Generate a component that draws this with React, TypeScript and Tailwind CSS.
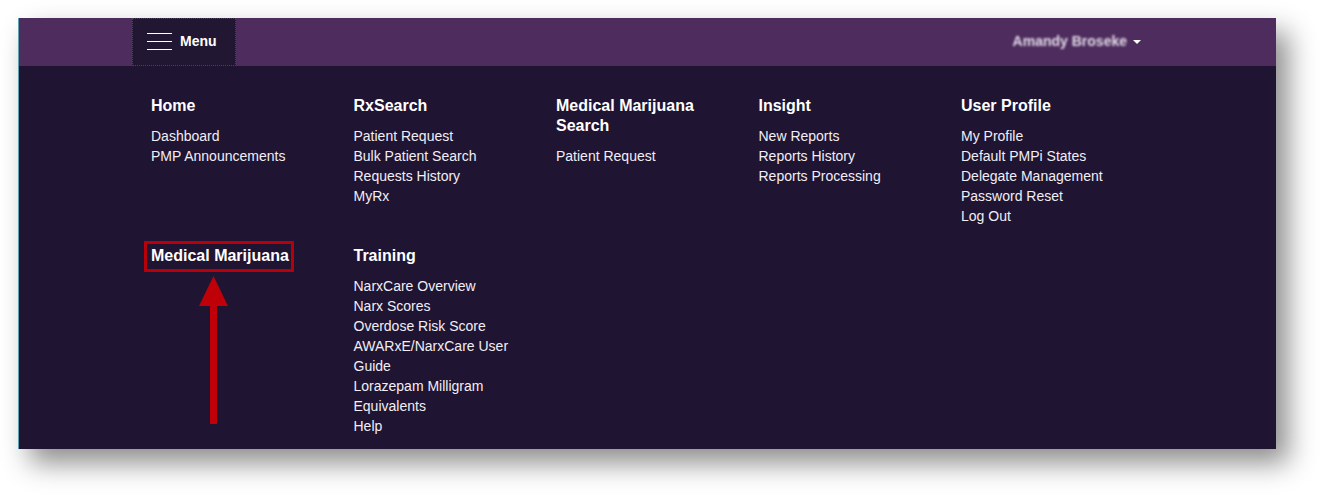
const sections = [
  { title: "Home", links: ["Dashboard", "PMP Announcements"] },
  { title: "RxSearch", links: ["Patient Request", "Bulk Patient Search", "Requests History", "MyRx"] },
  { title: "Medical Marijuana Search", links: ["Patient Request"] },
  { title: "Insight", links: ["New Reports", "Reports History", "Reports Processing"] },
  {
    title: "User Profile",
    links: ["My Profile", "Default PMPi States", "Delegate Management", "Password Reset", "Log Out"],
  },
  { title: "Medical Marijuana", links: [], highlight: true },
  {
    title: "Training",
    links: [
      "NarxCare Overview",
      "Narx Scores",
      "Overdose Risk Score",
      "AWARxE/NarxCare User Guide",
      "Lorazepam Milligram Equivalents",
      "Help",
    ],
  },
];

function Hamburger() {
  return (
    <span className="flex w-[25px] flex-col gap-[7px]">
      <span className="block h-px w-full bg-white" />
      <span className="block h-px w-full bg-white" />
      <span className="block h-px w-full bg-white" />
    </span>
  );
}

export default function App() {
  return (
    <div className="h-[497px] w-[1324px] overflow-hidden bg-white pl-[18px] pt-[18px] font-['Liberation_Sans',Arial,sans-serif]">
      <div className="flex h-[431px] w-[1258px] flex-col border-l border-[#5fa3b3] shadow-[12px_14px_26px_rgba(0,0,0,0.45)]">
        {/* Top bar */}
        <header className="flex h-12 items-stretch justify-between bg-[#4e2d5e] pl-[113px] pr-[135px]">
          <button className="flex w-[104px] items-center gap-2 border border-dotted border-[#4a4258] bg-[#211732] pb-[1px] pl-[14px] text-[14px] font-bold text-white">
            <Hamburger />
            <span>Menu</span>
          </button>
          <div className="flex items-center gap-[6px] pb-[2px]">
            <span className="text-[14px] font-bold text-[#e3dbe9] blur-[1.3px]">Amandy Broseke</span>
            <span className="mt-[1px] h-0 w-0 border-x-[4px] border-t-[4px] border-x-transparent border-t-white" />
          </div>
        </header>

        {/* Dropdown panel */}
        <div className="relative flex-1 bg-[#1f1431] pl-[132px] pt-[30px]">
          <div className="grid grid-cols-[202.5px_202.5px_202.5px_202.5px_202.5px] gap-y-5">
            {sections.map((s) => (
              <div key={s.title} className="pr-[30px]">
                <div className="relative">
                  <h3 className="text-[16px] font-bold leading-5 text-white">{s.title}</h3>
                  {s.highlight && (
                    <span className="pointer-events-none absolute left-[-7px] top-[-5px] h-[31px] w-[150px] border-[3px] border-[#b8000b]" />
                  )}
                </div>
                {s.links.length > 0 && (
                  <ul className="mt-[10px]">
                    {s.links.map((l) => (
                      <li key={l} className="text-[14px] leading-5 text-[#f1eef5]">
                        {l}
                      </li>
                    ))}
                  </ul>
                )}
              </div>
            ))}
          </div>

          {/* Annotation arrow */}
          <svg
            className="absolute left-[179px] top-[210px]"
            width="32"
            height="150"
            viewBox="0 0 32 150"
          >
            <polygon points="15.5,0 1,30 30,30" fill="#c00008" />
            <rect x="12" y="28" width="7" height="120" fill="#c00008" />
          </svg>
        </div>
      </div>
    </div>
  );
}
